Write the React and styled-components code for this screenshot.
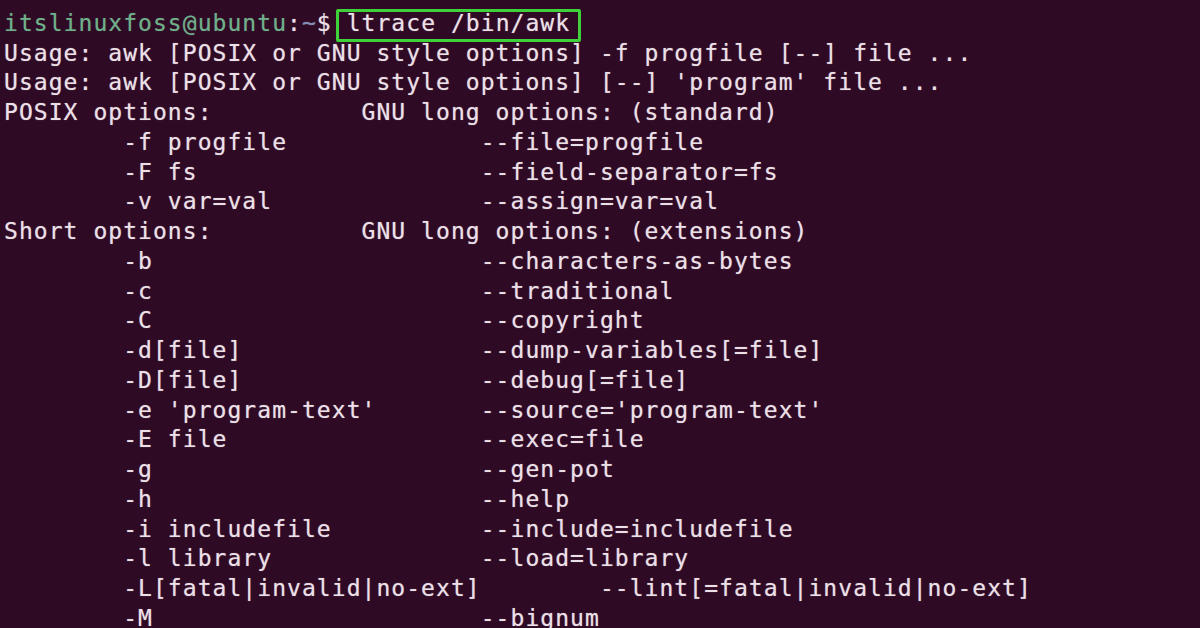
import React from 'react'
import styled, { createGlobalStyle } from 'styled-components'

const Global = createGlobalStyle`
  html, body {
    margin: 0;
    padding: 0;
    background: #2f0a25;
    overflow: hidden;
  }
`

const Terminal = styled.div`
  width: 1200px;
  height: 628px;
  overflow: hidden;
  background: #2f0a25;
  color: #ece0e8;
  font-family: "DejaVu Sans Mono", "Liberation Mono", monospace;
  font-size: 23px;
  letter-spacing: 1.05px;
  line-height: 29.75px;
  padding-left: 4px;
  box-sizing: border-box;
`

const Lines = styled.div`
  margin-top: -26px;
`

const Line = styled.div`
  white-space: pre;
  height: 29.75px;
  margin-bottom: ${p => (p.$gap ? p.$gap : 0)}px;
  text-shadow: 0 0 1px rgba(236, 224, 232, 0.55);
`

const User = styled.span`
  color: #6fb08a;
  text-shadow: 0 0 1px rgba(111, 176, 138, 0.5);
`

const Path = styled.span`
  color: #7f8fb8;
`

const Command = styled.span`
  position: relative;

  &::after {
    content: '';
    position: absolute;
    top: -1px;
    bottom: -6px;
    left: -11px;
    right: -11px;
    border: 3px solid #3ed13a;
    border-radius: 2px;
  }
`

const pad = (a, b, at = 24) => '        ' + a.padEnd(at, ' ') + b

const output = [
  'Usage: awk [POSIX or GNU style options] -f progfile [--] file ...',
  "Usage: awk [POSIX or GNU style options] [--] 'program' file ...",
  'POSIX options:          GNU long options: (standard)',
  pad('-f progfile', '--file=progfile'),
  pad('-F fs', '--field-separator=fs'),
  pad('-v var=val', '--assign=var=val'),
  'Short options:          GNU long options: (extensions)',
  pad('-b', '--characters-as-bytes'),
  pad('-c', '--traditional'),
  pad('-C', '--copyright'),
  pad('-d[file]', '--dump-variables[=file]'),
  pad('-D[file]', '--debug[=file]'),
  pad("-e 'program-text'", "--source='program-text'"),
  pad('-E file', '--exec=file'),
  pad('-g', '--gen-pot'),
  pad('-h', '--help'),
  pad('-i includefile', '--include=includefile'),
  pad('-l library', '--load=library'),
  pad('-L[fatal|invalid|no-ext]', '--lint[=fatal|invalid|no-ext]', 32),
  pad('-M', '--bignum'),
]

const Prompt = ({ children, gap }) => (
  <Line $gap={gap}>
    <User>itslinuxfoss@ubuntu</User>:<Path>~</Path>$ {children}
  </Line>
)

const App = () => {
  return (
    <>
      <Global />
      <Terminal>
        <Lines>
          <Prompt gap={5} />
          <Prompt>
            <Command>ltrace /bin/awk</Command>
          </Prompt>
          {output.map((text, i) => (
            <Line key={i}>{text}</Line>
          ))}
        </Lines>
      </Terminal>
    </>
  )
}

export default App
